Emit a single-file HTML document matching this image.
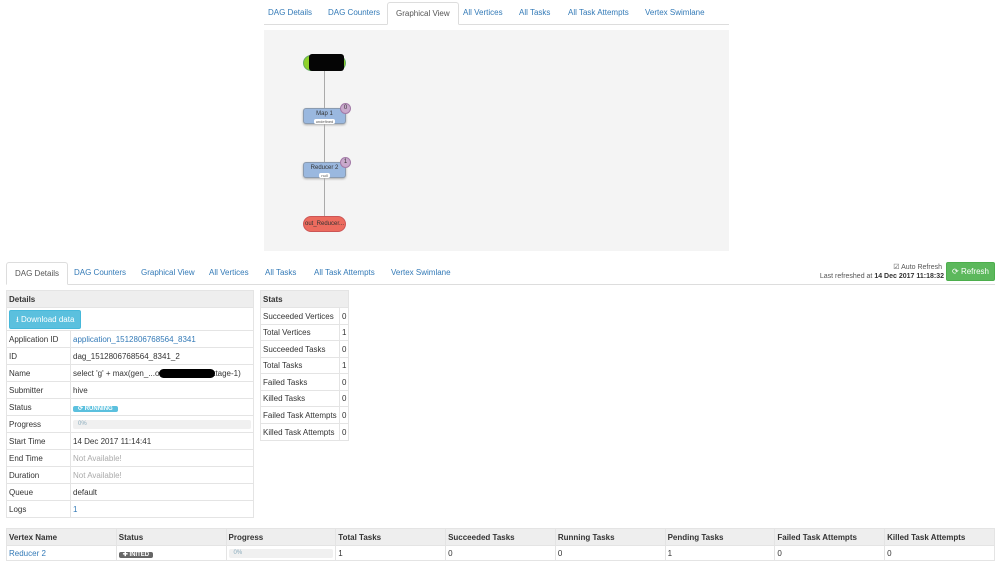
<!DOCTYPE html>
<html><head><meta charset="utf-8"><style>
*{box-sizing:border-box;margin:0;padding:0}
body{width:999px;height:568px;background:#fff;font-family:"Liberation Sans",sans-serif;font-size:8px;color:#333;position:relative;overflow:hidden}
.abs{position:absolute}
.tab{position:absolute;color:#337ab7;font-size:8px;line-height:22px;white-space:nowrap}
.tab.act{color:#555;border:1px solid #ddd;border-bottom:1px solid #fff;background:#fff;border-radius:3px 3px 0 0;padding:0 8px}
a{color:#337ab7}
table{border-collapse:collapse;position:absolute;font-size:8px;table-layout:fixed}
td,th{border:1px solid #e4e4e4;padding:0 2px;text-align:left;white-space:nowrap;overflow:hidden}
th{background:#eee;font-weight:bold}
.node{position:absolute;left:303px;width:43px;height:16px;border:1px solid #8a9bb0;background:#9ab8df;border-radius:3px;text-align:center;font-size:6px;line-height:8px;padding-top:1px;box-shadow:0 1px 2px #aaa}
.sub{display:inline-block;background:#fff;border-radius:2px;font-size:4px;line-height:5px;padding:0 2px;color:#555}
.badge{position:absolute;width:11px;height:11px;border-radius:50%;background:#c9a9cc;border:1px solid #a37aa7;font-size:6px;text-align:center;line-height:9px}
.na{color:#aaa}
</style></head><body>
<div class="abs" style="left:264px;top:24px;width:465px;border-top:1px solid #ddd"></div>
<span class="tab" style="left:268px;top:2px">DAG Details</span>
<span class="tab" style="left:328px;top:2px">DAG Counters</span>
<span class="tab act" style="left:387px;top:2px;height:23px">Graphical View</span>
<span class="tab" style="left:463px;top:2px">All Vertices</span>
<span class="tab" style="left:519px;top:2px">All Tasks</span>
<span class="tab" style="left:568px;top:2px">All Task Attempts</span>
<span class="tab" style="left:645px;top:2px">Vertex Swimlane</span>
<div class="abs" style="left:264px;top:30px;width:465px;height:221px;background:#f4f4f4"></div>
<div class="abs" style="left:324px;top:62px;width:1px;height:162px;background:#aaa"></div>
<div class="abs" style="left:303px;top:55px;width:43px;height:16px;border-radius:8px;background:#8fd12a;border:1px solid #6a6"></div>
<div class="abs" style="left:309px;top:54px;width:35px;height:17px;background:#050505;border-radius:3px"></div>
<div class="node" style="top:108px">Map 1<br><span class="sub">undefined</span></div>
<div class="badge" style="left:340px;top:103px">0</div>
<div class="node" style="top:162px">Reducer 2<br><span class="sub">null</span></div>
<div class="badge" style="left:340px;top:157px">1</div>
<div class="abs" style="left:303px;top:216px;width:43px;height:16px;border-radius:8px;background:#ec6b5e;border:1px solid #c55;font-size:6px;line-height:14px;text-align:center">out_Reducer...</div>

<div class="abs" style="left:6px;top:284px;width:989px;border-top:1px solid #ddd"></div>
<span class="tab act" style="left:6px;top:262px;height:23px">DAG Details</span>
<span class="tab" style="left:74px;top:262px">DAG Counters</span>
<span class="tab" style="left:141px;top:262px">Graphical View</span>
<span class="tab" style="left:209px;top:262px">All Vertices</span>
<span class="tab" style="left:265px;top:262px">All Tasks</span>
<span class="tab" style="left:314px;top:262px">All Task Attempts</span>
<span class="tab" style="left:391px;top:262px">Vertex Swimlane</span>
<div class="abs" style="right:57px;top:263px;font-size:7px;color:#555">&#9745; Auto Refresh</div>
<div class="abs" style="right:55px;top:273px;font-size:7px;color:#555">Last refreshed at <b style="color:#333">14 Dec 2017 11:18:32</b></div>
<div class="abs" style="left:946px;top:262px;width:49px;height:19px;background:#5cb85c;border:1px solid #4cae4c;border-radius:2px;color:#fff;font-size:8px;line-height:17px;text-align:center">&#10227; Refresh</div>

<table style="left:6px;top:290px;width:247px">
<colgroup><col style="width:64px"><col style="width:183px"></colgroup>
<tr style="height:17px"><th colspan="2">Details</th></tr>
<tr style="height:23px"><td colspan="2"><span style="display:inline-block;background:#5bc0de;border:1px solid #46b8da;color:#fff;padding:0 6px;line-height:17px;border-radius:2px">&#11123; Download data</span></td></tr>
<tr style="height:17px"><td>Application ID</td><td><a>application_1512806768564_8341</a></td></tr>
<tr style="height:17px"><td>ID</td><td>dag_1512806768564_8341_2</td></tr>
<tr style="height:17px"><td>Name</td><td>select 'g' + max(gen_...o<span style="background:#000;border-radius:6px;color:#000">xxxxxxxxxxxxxx</span>tage-1)</td></tr>
<tr style="height:17px"><td>Submitter</td><td>hive</td></tr>
<tr style="height:17px"><td>Status</td><td><span style="background:#5bc0de;color:#fff;font-size:6px;font-weight:bold;padding:0 5px;border-radius:2px">&#10227; RUNNING</span></td></tr>
<tr style="height:17px"><td>Progress</td><td><div style="background:#f0f0f0;height:9px;border-radius:2px;color:#8ab;font-size:6px;padding-left:5px;line-height:9px">0%</div></td></tr>
<tr style="height:17px"><td>Start Time</td><td>14 Dec 2017 11:14:41</td></tr>
<tr style="height:17px"><td>End Time</td><td class="na">Not Available!</td></tr>
<tr style="height:17px"><td>Duration</td><td class="na">Not Available!</td></tr>
<tr style="height:17px"><td>Queue</td><td>default</td></tr>
<tr style="height:17px"><td>Logs</td><td><a>1</a></td></tr>
</table>

<table style="left:260px;top:290px;width:88px">
<colgroup><col style="width:79px"><col style="width:9px"></colgroup>
<tr style="height:17px"><th colspan="2">Stats</th></tr>
<tr style="height:17px"><td>Succeeded Vertices</td><td>0</td></tr>
<tr style="height:16px"><td>Total Vertices</td><td>1</td></tr>
<tr style="height:17px"><td>Succeeded Tasks</td><td>0</td></tr>
<tr style="height:16px"><td>Total Tasks</td><td>1</td></tr>
<tr style="height:17px"><td>Failed Tasks</td><td>0</td></tr>
<tr style="height:16px"><td>Killed Tasks</td><td>0</td></tr>
<tr style="height:17px"><td>Failed Task Attempts</td><td>0</td></tr>
<tr style="height:17px"><td>Killed Task Attempts</td><td>0</td></tr>
</table>

<table style="left:6px;top:528px;width:989px">
<tr style="height:17px"><th>Vertex Name</th><th>Status</th><th>Progress</th><th>Total Tasks</th><th>Succeeded Tasks</th><th>Running Tasks</th><th>Pending Tasks</th><th>Failed Task Attempts</th><th>Killed Task Attempts</th></tr>
<tr style="height:15px"><td><a>Reducer 2</a></td><td><span style="background:#666;color:#fff;font-size:6px;font-weight:bold;padding:0 4px;border-radius:2px">&#10010; INITED</span></td><td><div style="background:#f0f0f0;height:9px;border-radius:2px;color:#8ab;font-size:6px;padding-left:5px;line-height:9px">0%</div></td><td>1</td><td>0</td><td>0</td><td>1</td><td>0</td><td>0</td></tr>
</table>
</body></html>
